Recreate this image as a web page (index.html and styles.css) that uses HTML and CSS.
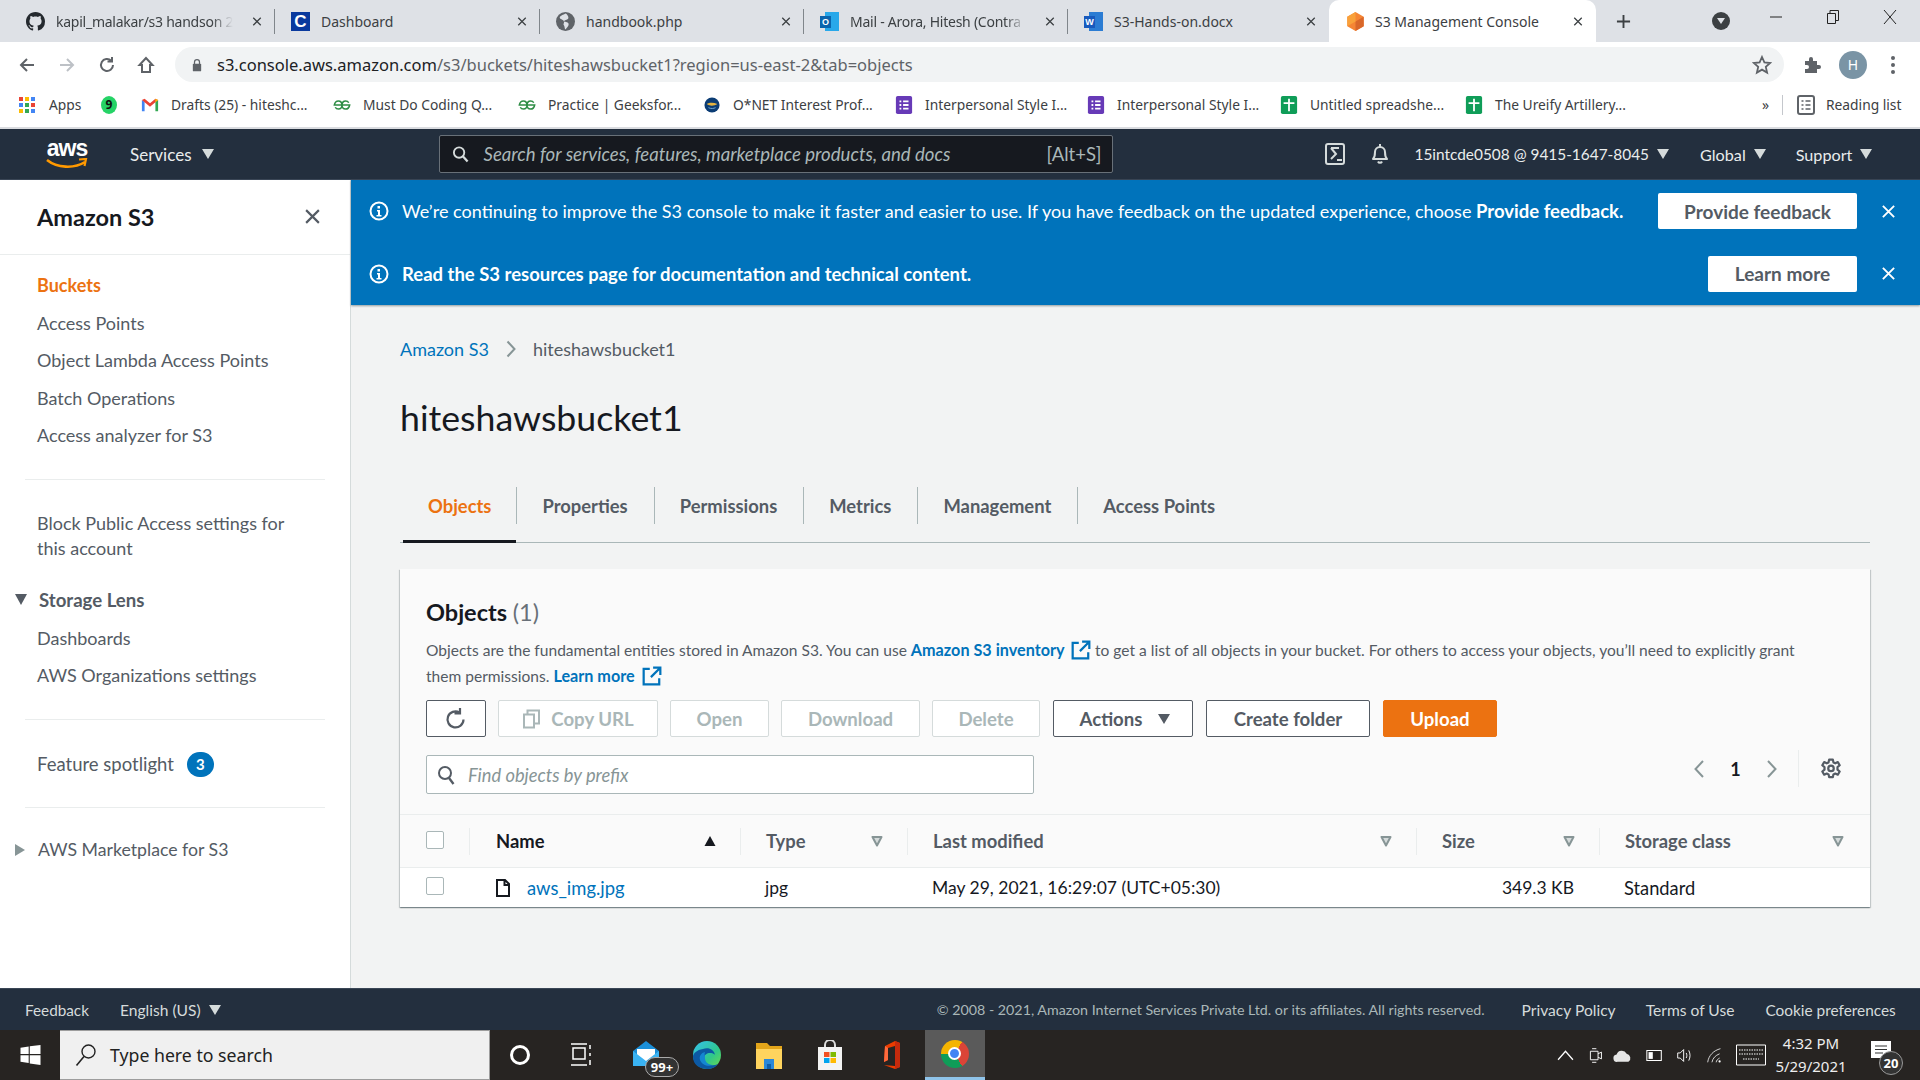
FILE: index.html
```html
<!DOCTYPE html>
<html lang="en">
<head>
<meta charset="utf-8">
<title>S3 Management Console</title>
<link rel="stylesheet" href="styles.css">
</head>
<body>
<svg class="defs" width="0" height="0" aria-hidden="true">
  <symbol id="filter" viewBox="0 0 12 12"><path d="M1.5 2h9L6 10.5z" fill="#d5dbdb" stroke="#879596" stroke-width="2" stroke-linejoin="round"/></symbol>
  <symbol id="ext" viewBox="0 0 18 18"><path d="M7 2.500H1.500v14h14V11M10 1.500h6.500V8M16 2L8 10" fill="none" stroke="currentColor" stroke-width="2"/></symbol>
  <symbol id="form" viewBox="0 0 20 20"><rect x="1" y="0" width="18" height="20" rx="2" fill="#673ab7"/><path d="M5 5h2v2H5zM9 5h6v2H9zM5 9h2v2H5zM9 9h6v2H9zM5 13h2v2H5zM9 13h6v2H9z" fill="#fff"/></symbol>
  <symbol id="sheet" viewBox="0 0 20 20"><rect x="1" y="0" width="18" height="20" rx="2" fill="#0f9d58"/><path d="M4 7h12v2H4zM9 3h2v14H9z" fill="#fff"/></symbol>
  <symbol id="gfg" viewBox="0 0 20 12"><path d="M10 6H18.500C18 9 16 10.500 14 10.500 11.500 10.500 10 8.500 10 6S8.500 1.500 6 1.500C4 1.500 2 3 1.500 6H10M10 6c0-2.500 1.500-4.500 4-4.500 1.500 0 2.800.7 3.500 2M10 6c0 2.500-1.500 4.500-4 4.500-1.500 0-2.800-.7-3.500-2" fill="none" stroke="#2f8d46" stroke-width="1.700"/></symbol>
  <symbol id="info" viewBox="0 0 20 20"><circle cx="10" cy="10" r="8.500" fill="none" stroke="#fff" stroke-width="2"/><path d="M8.500 5h2.500v2.500H8.500zM8 9h3v5h1.500v1.500h-5V14H9v-3.500H8z" fill="#fff"/></symbol>
  <symbol id="cross" viewBox="0 0 16 16"><path d="M2 2l12 12M14 2L2 14" fill="none" stroke="currentColor" stroke-width="2"/></symbol>
</svg>

<div class="tabstrip">
  <div class="tab sep">
    <svg class="favicon" viewBox="0 0 16 16"><path fill="#24292e" d="M8 0C3.580 0 0 3.580 0 8c0 3.540 2.290 6.530 5.470 7.590.4.070.55-.17.55-.38 0-.19-.01-.82-.01-1.490-2.010.37-2.530-.49-2.690-.94-.09-.23-.48-.94-.82-1.130-.28-.15-.68-.52-.01-.53.63-.01 1.080.58 1.230.82.720 1.210 1.870.87 2.330.66.07-.52.28-.87.51-1.070-1.780-.2-3.640-.89-3.640-3.950 0-.87.31-1.590.82-2.150-.08-.2-.36-1.020.08-2.120 0 0 .67-.21 2.200.82.64-.18 1.320-.27 2-.27.68 0 1.360.09 2 .27 1.530-1.040 2.200-.82 2.200-.82.44 1.100.16 1.920.08 2.120.51.56.82 1.270.82 2.150 0 3.070-1.870 3.750-3.650 3.950.29.25.54.73.54 1.480 0 1.070-.01 1.930-.01 2.200 0 .21.15.46.55.38A8.013 8.013 0 0016 8c0-4.420-3.580-8-8-8z"/></svg>
    <span class="tab-title fade">kapil_malakar/s3 handson 2</span>
    <svg class="tab-x"><use href="#cross"/></svg>
  </div>
  <div class="tab sep">
    <span class="favicon fav-c">C</span>
    <span class="tab-title">Dashboard</span>
    <svg class="tab-x"><use href="#cross"/></svg>
  </div>
  <div class="tab sep">
    <svg class="favicon" viewBox="0 0 18 18"><circle cx="9" cy="9" r="9" fill="#5f6368"/><path d="M9 1.500C7 3 4 3 3.500 5.500c1 2 3.500 1.500 4 3.500s-1 2 0 3.500.5 3.500 1.500 4c1-1.500 3-3 3-5s-3-2-4.500-2.500c.5-1.500 3-1 4-2.500S10.500 2 9 1.500z" fill="#dee1e6"/></svg>
    <span class="tab-title">handbook.php</span>
    <svg class="tab-x"><use href="#cross"/></svg>
  </div>
  <div class="tab sep">
    <span class="favicon fav-o"><span class="fav-o-back"></span><span class="fav-o-front">O</span></span>
    <span class="tab-title fade">Mail - Arora, Hitesh (Contra</span>
    <svg class="tab-x"><use href="#cross"/></svg>
  </div>
  <div class="tab">
    <span class="favicon fav-w"><span class="fav-w-back"></span><span class="fav-w-front">W</span></span>
    <span class="tab-title">S3-Hands-on.docx</span>
    <svg class="tab-x"><use href="#cross"/></svg>
  </div>
  <div class="tab active">
    <svg class="favicon" viewBox="0 0 20 22"><path d="M10 0l9.500 5.500v11L10 22 .5 16.500v-11z" fill="#f58534"/><path d="M10 11l9.500-5.500v11L10 22z" fill="#d9672a"/><path d="M.5 5.500L10 0v11l-9.500 5.500z" fill="#f9a13a"/></svg>
    <span class="tab-title">S3 Management Console</span>
    <svg class="tab-x"><use href="#cross"/></svg>
  </div>
  <div class="strip-end">
    <svg class="newtab" viewBox="0 0 16 16"><path d="M8 1v14M1 8h14" stroke="#3c4043" stroke-width="2" fill="none"/></svg>
    <span class="profile-dot"><span class="profile-arrow"></span></span>
    <div class="winctl">
      <svg class="win-ic" viewBox="0 0 14 14"><path d="M1 7h12" stroke="#222" fill="none"/></svg>
      <svg class="win-ic" viewBox="0 0 14 14"><path d="M1.500 3.500h8v10h-8zM4 3.500V.5h8.500v10H9.500" stroke="#222" fill="none"/></svg>
      <svg class="win-ic" viewBox="0 0 14 14"><path d="M1 0l12 14M13 0L1 14" stroke="#222" fill="none"/></svg>
    </div>
  </div>
</div>

<div class="toolbar">
  <svg class="tool-ic" viewBox="0 0 18 18"><path d="M16 9H3M9 3L3 9l6 6" fill="none" stroke="#5f6368" stroke-width="2"/></svg>
  <svg class="tool-ic" viewBox="0 0 18 18"><path d="M2 9h13M9 3l6 6-6 6" fill="none" stroke="#bdc1c6" stroke-width="2"/></svg>
  <svg class="tool-ic" viewBox="0 0 18 18"><path d="M15 9a6 6 0 1 1-1.800-4.300M14 1v4.500H9.500" fill="none" stroke="#5f6368" stroke-width="2"/></svg>
  <svg class="tool-ic" viewBox="0 0 18 18"><path d="M9 2L2.500 9H5v7h8V9h2.500z" fill="none" stroke="#5f6368" stroke-width="2"/></svg>
  <div class="omnibox">
    <svg class="lock" viewBox="0 0 12 16"><path d="M3 7V4.500a3 3 0 0 1 6 0V7" fill="none" stroke="#5f6368" stroke-width="1.500"/><rect x="1" y="6.500" width="10" height="9" rx="1" fill="#5f6368"/></svg>
    <span class="url"><span class="url-host">s3.console.aws.amazon.com</span>/s3/buckets/hiteshawsbucket1?region=us-east-2&amp;tab=objects</span>
    <svg class="star" viewBox="0 0 20 20"><path d="M10 2l2.400 5.400 5.800.6-4.400 3.900 1.300 5.700L10 14.600 4.900 17.600l1.300-5.700L1.800 8l5.800-.6z" fill="none" stroke="#5f6368" stroke-width="1.800"/></svg>
  </div>
  <svg class="puzzle" viewBox="0 0 20 20"><path d="M3 6h4V4a2 2 0 0 1 4 0v2h4v4h2a2 2 0 0 1 0 4h-2v4H3v-4h2a2 2 0 0 0 0-4H3z" fill="#5f6368"/></svg>
  <span class="avatar">H</span>
  <span class="kebab"><i></i><i></i><i></i></span>
</div>

<div class="bookmarks">
  <div class="bm-list">
    <div class="bm"><span class="apps"><i class="r"></i><i class="y"></i><i class="b"></i><i class="b"></i><i class="g"></i><i class="r"></i><i class="y"></i><i class="g"></i><i class="b"></i></span><span class="bm-t">Apps</span></div>
    <div class="bm"><span class="bm-nine">9</span></div>
    <div class="bm"><svg class="bm-ic" viewBox="0 0 20 16"><path d="M1 15V2.500l3 2V15z" fill="#4285f4"/><path d="M16 15V4.500l3-2V15z" fill="#34a853"/><path d="M1 2.500L4 1l6 5 6-5 3 1.500L10 10z" fill="#ea4335"/><path d="M16 1l3 1.500L16 5z" fill="#fbbc04"/></svg><span class="bm-t">Drafts (25) - hiteshc...</span></div>
    <div class="bm"><svg class="bm-ic" viewBox="0 0 20 12"><use href="#gfg"/></svg><span class="bm-t">Must Do Coding Q...</span></div>
    <div class="bm"><svg class="bm-ic" viewBox="0 0 20 12"><use href="#gfg"/></svg><span class="bm-t">Practice | Geeksfor...</span></div>
    <div class="bm"><svg class="bm-ic" viewBox="0 0 18 18"><circle cx="9" cy="9" r="8.500" fill="#0b3c74"/><path d="M3 8c3-2 8-2 12 0-3 2-8 3-12 0z" fill="#e3b341"/><path d="M5 12c3 1.500 6 1 8 0" stroke="#7ab3e0" fill="none"/></svg><span class="bm-t">O*NET Interest Prof...</span></div>
    <div class="bm"><svg class="bm-ic tall"><use href="#form"/></svg><span class="bm-t">Interpersonal Style I...</span></div>
    <div class="bm"><svg class="bm-ic tall"><use href="#form"/></svg><span class="bm-t">Interpersonal Style I...</span></div>
    <div class="bm"><svg class="bm-ic tall"><use href="#sheet"/></svg><span class="bm-t">Untitled spreadshe...</span></div>
    <div class="bm"><svg class="bm-ic tall"><use href="#sheet"/></svg><span class="bm-t">The Ureify Artillery...</span></div>
  </div>
  <span class="bm-more">»</span>
  <div class="bm-reading">
    <svg class="bm-ic tall" viewBox="0 0 18 20"><rect x="1" y="1" width="16" height="18" rx="2" fill="none" stroke="#5f6368" stroke-width="2"/><path d="M4.500 6h2M8.500 6h5M4.500 10h2M8.500 10h5M4.500 14h2M8.500 14h5" stroke="#5f6368" stroke-width="1.500"/></svg>
    <span class="bm-t">Reading list</span>
  </div>
</div>

<header class="awsnav">
  <div class="aws-logo">
    <span class="aws-word">aws</span>
    <svg class="aws-smile" viewBox="0 0 42 13"><path d="M1 2c10 8 27 9 38 2" fill="none" stroke="#ff9900" stroke-width="2.600"/><path d="M33 1.500l7-.5-1.500 7" fill="none" stroke="#ff9900" stroke-width="2.200"/></svg>
  </div>
  <span class="nav-link services">Services</span><span class="caret"></span>
  <div class="nav-search">
    <svg class="nav-search-ic" viewBox="0 0 18 18"><circle cx="7.500" cy="7.500" r="5.500" fill="none" stroke="#d5dbdb" stroke-width="2"/><path d="M11.500 11.500l5 5.500" stroke="#d5dbdb" stroke-width="2.400"/></svg>
    <span class="nav-ph">Search for services, features, marketplace products, and docs</span>
    <span class="nav-kbd">[Alt+S]</span>
  </div>
  <div class="nav-right">
    <svg class="nav-ic" viewBox="0 0 20 22"><rect x="1" y="1" width="18" height="20" rx="2" fill="none" stroke="#d5dbdb" stroke-width="2"/><path d="M6 5h8M6 5l5 6-5 5" fill="none" stroke="#d5dbdb" stroke-width="2"/><path d="M12 17h5" stroke="#d5dbdb" stroke-width="2"/></svg>
    <svg class="nav-ic bell" viewBox="0 0 20 22"><path d="M3 16c2-2 2-4 2-7a5 5 0 0 1 10 0c0 3 0 5 2 7z" fill="none" stroke="#d5dbdb" stroke-width="2" stroke-linejoin="round"/><path d="M8 18.500a2.200 2.200 0 0 0 4 0M10 1v3" fill="none" stroke="#d5dbdb" stroke-width="2"/></svg>
    <span class="nav-link acct">15intcde0508 @ 9415-1647-8045</span><span class="caret"></span>
    <span class="nav-link glob">Global</span><span class="caret"></span>
    <span class="nav-link supp">Support</span><span class="caret"></span>
  </div>
</header>

<div class="app">
  <aside class="side">
    <div class="side-head">
      <span class="side-title">Amazon S3</span>
      <svg class="side-x"><use href="#cross"/></svg>
    </div>
    <nav class="side-group first">
      <a class="side-item current">Buckets</a>
      <a class="side-item">Access Points</a>
      <a class="side-item">Object Lambda Access Points</a>
      <a class="side-item">Batch Operations</a>
      <a class="side-item">Access analyzer for S3</a>
    </nav>
    <hr class="side-rule">
    <a class="side-multi">Block Public Access settings for this account</a>
    <div class="side-section"><span class="tri-down"></span><span>Storage Lens</span></div>
    <nav class="side-group lens">
      <a class="side-item">Dashboards</a>
      <a class="side-item">AWS Organizations settings</a>
    </nav>
    <hr class="side-rule second">
    <div class="side-spot"><span>Feature spotlight</span><span class="badge">3</span></div>
    <hr class="side-rule third">
    <div class="side-market"><span class="tri-right"></span><span>AWS Marketplace for S3</span></div>
  </aside>

  <main class="main">
    <section class="flash">
      <div class="flash-row">
        <svg class="flash-ic"><use href="#info"/></svg>
        <p class="flash-text">We’re continuing to improve the S3 console to make it faster and easier to use. If you have feedback on the updated experience, choose <b>Provide feedback.</b></p>
        <span class="flash-btn fb">Provide feedback</span>
        <svg class="flash-x"><use href="#cross"/></svg>
      </div>
      <div class="flash-row">
        <svg class="flash-ic"><use href="#info"/></svg>
        <p class="flash-text"><b>Read the S3 resources page for documentation and technical content.</b></p>
        <span class="flash-btn lm">Learn more</span>
        <svg class="flash-x"><use href="#cross"/></svg>
      </div>
    </section>

    <div class="content">
      <div class="crumbs">
        <a class="link">Amazon S3</a>
        <svg class="crumb-sep" viewBox="0 0 10 18"><path d="M1.500 1.500L8.500 9l-7 7.500" fill="none" stroke="#879596" stroke-width="2"/></svg>
        <span class="crumb-cur">hiteshawsbucket1</span>
      </div>
      <h1 class="title">hiteshawsbucket1</h1>
      <div class="tabs">
        <span class="ctab on">Objects</span>
        <span class="ctab">Properties</span>
        <span class="ctab">Permissions</span>
        <span class="ctab">Metrics</span>
        <span class="ctab">Management</span>
        <span class="ctab last">Access Points</span>
      </div>

      <section class="card">
        <div class="card-head">
          <h2 class="card-title">Objects <span class="count">(1)</span></h2>
          <p class="desc">Objects are the fundamental entities stored in Amazon S3. You can use <a class="link strong">Amazon S3 inventory <svg class="ext"><use href="#ext"/></svg></a> to get a list of all objects in your bucket. For others to access your objects, you’ll need to explicitly grant them permissions. <a class="link strong">Learn more <svg class="ext"><use href="#ext"/></svg></a></p>
          <div class="actions">
            <span class="btn refresh"><svg class="refresh-ic" viewBox="0 0 22 24"><path d="M18.500 12.500a8 8 0 1 1-4-7M15 1v5.500H9.500" fill="none" stroke="#545b64" stroke-width="2.200"/></svg></span>
            <span class="btn off copy"><svg class="copy-ic" viewBox="0 0 18 20"><path d="M1.500 5.500h10v13h-10zM5 5V1.500h11.500v13H12" fill="none" stroke="#aab7b8" stroke-width="2"/></svg>Copy URL</span>
            <span class="btn off open">Open</span>
            <span class="btn off dl">Download</span>
            <span class="btn off del">Delete</span>
            <span class="btn act">Actions<span class="caret dark"></span></span>
            <span class="btn mk">Create folder</span>
            <span class="btn up">Upload</span>
          </div>
          <div class="filter-row">
            <div class="filter">
              <svg class="filter-ic" viewBox="0 0 18 20"><circle cx="8" cy="8" r="6" fill="none" stroke="#545b64" stroke-width="2"/><path d="M12 13l4.500 6" stroke="#545b64" stroke-width="2.400"/></svg>
              <span class="filter-ph">Find objects by prefix</span>
            </div>
            <div class="pager">
              <svg class="pg-ch" viewBox="0 0 12 20"><path d="M10 2L2.500 10l7.500 8" fill="none" stroke="#879596" stroke-width="2"/></svg>
              <span class="pg-num">1</span>
              <svg class="pg-ch" viewBox="0 0 12 20"><path d="M2 2l7.500 8L2 18" fill="none" stroke="#879596" stroke-width="2"/></svg>
              <span class="pg-div"></span>
              <svg class="pg-gear" viewBox="0 0 20 20"><path d="M8.300 1.500h3.400l.5 2.500 1.700.8 2.300-1.100 1.700 2.900-2 1.700v2.300l2 1.700-1.700 2.900-2.300-1.100-1.700.8-.5 2.500H8.300l-.5-2.500-1.700-.8-2.300 1.100-1.700-2.900 2-1.700V8.300l-2-1.700 1.700-2.900 2.300 1.100 1.700-.8z" fill="none" stroke="#545b64" stroke-width="2" stroke-linejoin="round"/><circle cx="10" cy="9.500" r="2.500" fill="none" stroke="#545b64" stroke-width="2"/></svg>
            </div>
          </div>
        </div>
        <div class="thead">
          <div class="th-check"><span class="check"></span></div>
          <div class="th-wrap"><div class="th first"><span>Name</span><svg class="sort-up" viewBox="0 0 12 12"><path d="M6 1l5.500 10H.5z" fill="#16191f"/></svg></div></div>
          <div class="th-wrap"><div class="th"><span>Type</span><svg class="sort"><use href="#filter"/></svg></div></div>
          <div class="th-wrap"><div class="th"><span>Last modified</span><svg class="sort"><use href="#filter"/></svg></div></div>
          <div class="th-wrap"><div class="th"><span>Size</span><svg class="sort"><use href="#filter"/></svg></div></div>
          <div class="th-wrap"><div class="th end"><span>Storage class</span><svg class="sort"><use href="#filter"/></svg></div></div>
        </div>
        <div class="trow">
          <div class="th-check"><span class="check"></span></div>
          <div class="td name"><svg class="file-ic" viewBox="0 0 14 18"><path d="M1 1h8l4 4v12H1zM8.500 1v5h4.500" fill="none" stroke="#16191f" stroke-width="2"/></svg><a class="link">aws_img.jpg</a></div>
          <div class="td">jpg</div>
          <div class="td">May 29, 2021, 16:29:07 (UTC+05:30)</div>
          <div class="td right">349.3 KB</div>
          <div class="td cls">Standard</div>
        </div>
      </section>
    </div>
  </main>
</div>

<footer class="foot">
  <span class="f-fb">Feedback</span>
  <span class="f-lang">English (US)</span><span class="caret"></span>
  <span class="f-copy">© 2008 - 2021, Amazon Internet Services Private Ltd. or its affiliates. All rights reserved.</span>
  <span class="f-link pp">Privacy Policy</span>
  <span class="f-link tu">Terms of Use</span>
  <span class="f-link cp">Cookie preferences</span>
</footer>

<div class="taskbar">
  <div class="tb-start"><svg class="win-logo" viewBox="0 0 22 22"><path d="M0 3l9-1.300V10H0zM10.200 1.500L22 0v10H10.200zM0 11.200h9v8.500L0 18.500zM10.200 11.200H22V22l-11.800-1.700z" fill="#fff"/></svg></div>
  <div class="tb-search">
    <svg class="tb-mag" viewBox="0 0 22 24"><circle cx="13.500" cy="8.500" r="6.500" fill="none" stroke="#222" stroke-width="1.400"/><path d="M9 13.500L1.500 22.500" stroke="#222" stroke-width="1.600"/></svg>
    <span class="tb-ph">Type here to search</span>
  </div>
  <div class="tb-cortana"><span class="ring"></span></div>
  <div class="tb-task"><svg class="tv" viewBox="0 0 22 24"><path d="M3 5h12v11H3zM1 1h16M1 22h16M20 2v4M20 10v3M20 17v5" fill="none" stroke="#fff" stroke-width="1.500"/></svg></div>
  <div class="tb-icon mail">
    <svg class="tb-app" viewBox="0 0 30 30"><path d="M2 11L15 1l13 10v15H2z" fill="#1b8fd8"/><path d="M6 9h18v8l-9 5-9-5z" fill="#fff"/><path d="M2 11l13 10 13-10v15H2z" fill="#3ab3f3"/></svg>
    <span class="tb-badge">99+</span>
  </div>
  <div class="tb-icon">
    <svg class="tb-app" viewBox="0 0 30 30"><defs><linearGradient id="eg" x1="0" y1="0" x2="1" y2="1"><stop offset="0" stop-color="#35c1f1"/><stop offset=".6" stop-color="#2fc88b"/><stop offset="1" stop-color="#6fdb4a"/></linearGradient></defs><circle cx="15" cy="15" r="14" fill="url(#eg)"/><path d="M1 17C1 25 8 29 15 29c5 0 9-2 11-5-7 3-14 0-14-6 0-3 3-5 6-5 4 0 5 2 5 2C22 9 16 7 11 9 5 10 1 13 1 17z" fill="#0c59a4"/><path d="M13 18c0 4 3 7 8 7-5 2-11 0-13-5-1-4 1-7 5-8-1 2 0 4 0 6z" fill="#1486d1"/></svg>
  </div>
  <div class="tb-icon">
    <svg class="tb-app" viewBox="0 0 30 30"><path d="M2 3h11l3 3h12v5H2z" fill="#e3a51a"/><path d="M2 9h26v20H2z" fill="#ffd45e"/><path d="M10 19h10v10H10z" fill="#2b88d8"/><path d="M13 24h4v5h-4z" fill="#0f5ea8"/></svg>
  </div>
  <div class="tb-icon">
    <svg class="tb-app" viewBox="0 0 30 30"><path d="M10 8V5a5 5 0 0 1 10 0v3" fill="none" stroke="#ddd" stroke-width="2"/><path d="M3 7h24v23H3z" fill="#f3f3f3"/><path d="M9 12h5.500v5H9z" fill="#f25022"/><path d="M15.500 12H21v5h-5.500z" fill="#7fba00"/><path d="M9 18h5.500v5H9z" fill="#00a4ef"/><path d="M15.500 18H21v5h-5.500z" fill="#ffb900"/></svg>
  </div>
  <div class="tb-icon">
    <svg class="tb-app" viewBox="0 0 30 30"><path d="M8 6l10-5 5 2v24l-5 2L7 25l11 1V6l-7 2v12l-4 2z" fill="#eb3c00"/><path d="M18 1l5 2v24l-5 2z" fill="#c62a0c"/><path d="M7 22l4-2V8L8 6z" fill="#ff6a3d"/></svg>
  </div>
  <div class="tb-icon chrome"><span class="chrome-logo"><span class="chrome-eye"></span></span></div>
  <div class="tb-tray">
    <svg class="tr" viewBox="0 0 16 16"><path d="M1 12l7-8 7 8" fill="none" stroke="#fff" stroke-width="1.200"/></svg>
    <svg class="tr" viewBox="0 0 16 20"><path d="M2 5h9v10H2zM11 8l4-2v8l-4-2M4 2h5M4 18h5" fill="none" stroke="#fff" stroke-width="1.100"/></svg>
    <svg class="tr wide" viewBox="0 0 22 16"><path d="M5 15a4 4 0 0 1-1-8 6 6 0 0 1 11-1 5 5 0 0 1 2 9z" fill="#e6e6e6"/></svg>
    <svg class="tr" viewBox="0 0 20 16"><path d="M1 2h17v12H1z" fill="none" stroke="#fff" stroke-width="1.200"/><path d="M3 4h5v8H3z" fill="#fff"/></svg>
    <svg class="tr" viewBox="0 0 20 20"><path d="M2 7h3l4-4v14l-4-4H2zM12 7c1 2 1 4 0 6M15 4c2 4 2 8 0 12" fill="none" stroke="#fff" stroke-width="1.100"/></svg>
    <svg class="tr" viewBox="0 0 20 20"><path d="M2 18C3 10 9 4 17 2M7 18c1-5 4-8 9-10M12 18c0-2 2-4 4-5" fill="none" stroke="#ddd" stroke-width="1.100"/><circle cx="16" cy="17" r="1.300" fill="#fff"/></svg>
    <svg class="tr kb" viewBox="0 0 30 22"><path d="M.5 1h29v20H.5z" fill="none" stroke="#fff"/><path d="M3 6h24M3 10h24M7 15h16" stroke="#fff" stroke-dasharray="1.500 1"/></svg>
    <div class="clock"><span>4:32 PM</span><span>5/29/2021</span></div>
    <div class="notif">
      <svg class="notif-ic" viewBox="0 0 20 20"><path d="M0 0h20v17H0z" fill="#fff"/><path d="M4 5h12M4 8.500h12M4 12h8" stroke="#333" stroke-width="1.200"/></svg>
      <span class="notif-badge">20</span>
    </div>
  </div>
</div>
</body>
</html>
```

FILE: styles.css
```css
* { box-sizing: border-box; }
html, body { margin: 0; padding: 0; }
body { width: 1920px; height: 1080px; overflow: hidden; display: flex; flex-direction: column; font-family: "Lato", "Liberation Sans", sans-serif; color: #16191f; background: #fff; }
.defs { position: absolute; }
a { text-decoration: none; }
p, h1, h2 { margin: 0; font-weight: normal; }
hr { border: 0; margin: 0; }

/* chrome tabs */
.tabstrip { flex: 0 0 42px; background: #dee1e6; display: grid; grid-template-columns: 265px 265px 264px 264px 261px 267px 1fr; padding-left: 10px; font-family: "Noto Sans", sans-serif; font-size: 14px; color: #3c4043; }
.tab { display: flex; align-items: center; padding: 0 9px 0 16px; gap: 11px; position: relative; }
.tab.sep::after { content: ""; position: absolute; right: 0; top: 9px; height: 25px; width: 1px; background: #80868b; }
.tab.active { background: #fff; border-radius: 10px 10px 0 0; padding-left: 17px; gap: 10px; }
.favicon { flex: 0 0 19px; width: 19px; height: 19px; }
.fav-c { background: #0a3a9e; color: #fff; font: bold 17px/19px "Liberation Sans", sans-serif; text-align: center; }
.fav-o, .fav-w { position: relative; display: block; }
.fav-o-back, .fav-w-back { position: absolute; right: 0; top: 0; width: 14px; height: 19px; background: #28a8ea; }
.fav-w-back { background: #2b7cd3; }
.fav-o-front, .fav-w-front { position: absolute; left: 0; top: 4px; width: 11px; height: 12px; background: #0a64ad; color: #fff; font: bold 9px/12px "Liberation Sans", sans-serif; text-align: center; }
.fav-w-front { background: #185abd; }
.tab-title { flex: 1; white-space: nowrap; min-width: 0; }
.tab-title.fade { letter-spacing: -0.25px; -webkit-mask-image: linear-gradient(90deg, #000 88%, transparent); mask-image: linear-gradient(90deg, #000 88%, transparent); }
.tab-x { flex: 0 0 10px; width: 10px; height: 11px; margin: 0 4px 0 8px; color: #3c4043; }
.strip-end { display: flex; align-items: center; }
.newtab { width: 15px; height: 15px; margin-left: 20px; }
.profile-dot { width: 18px; height: 18px; border-radius: 50%; background: #3c4043; margin-left: 81px; display: flex; align-items: center; justify-content: center; }
.profile-arrow { width: 0; height: 0; border: 4px solid transparent; border-top: 6px solid #dee1e6; border-bottom: 0; }
.winctl { display: flex; gap: 43px; margin-left: 39px; }
.win-ic { width: 14px; height: 14px; margin-bottom: 8px; }

/* toolbar */
.toolbar { flex: 0 0 42px; display: flex; align-items: center; padding: 3px 0 0 18px; background: #fff; }
.tool-ic { width: 18px; height: 18px; margin-right: 22px; }
.tool-ic:nth-child(3) { margin-right: 21px; }
.tool-ic:nth-child(4) { margin-right: 20px; }
.omnibox { width: 1609px; height: 35px; background: #f1f3f4; border-radius: 18px; display: flex; align-items: center; padding: 0 12px 0 17px; font-family: "Noto Sans", sans-serif; font-size: 16.500px; color: #5f6368; }
.lock { width: 10px; height: 14px; margin-right: 15px; }
.url { flex: 1; white-space: nowrap; }
.url-host { color: #202124; }
.star { width: 20px; height: 20px; }
.puzzle { width: 20px; height: 20px; margin-left: 18px; }
.avatar { width: 28px; height: 28px; border-radius: 50%; background: #7a94a5; color: #fff; font: 14px/28px "Noto Sans", sans-serif; text-align: center; margin-left: 17px; }
.kebab { display: flex; flex-direction: column; gap: 3px; margin-left: 24px; }
.kebab i { width: 4px; height: 4px; border-radius: 50%; background: #5f6368; }

/* bookmarks */
.bookmarks { flex: 0 0 45px; border-bottom: 2px solid #dadce0; display: flex; align-items: center; padding: 0 0 2px 19px; font-family: "Noto Sans", sans-serif; font-size: 13.800px; color: #3c4043; background: #fff; }
.bm-list { display: grid; grid-template-columns: 82px 40px 192px 185px 185px 192px 192px 193px 185px 280px; flex: 0 0 1736px; }
.bm { display: flex; align-items: center; gap: 12px; white-space: nowrap; }
.bm-t { white-space: nowrap; }
.bm-ic { width: 18px; height: 16px; flex: 0 0 18px; }
.bm-ic.tall { height: 20px; width: 18px; }
.apps { display: grid; grid-template-columns: repeat(3, 4px); gap: 2px; width: 18px; }
.apps i { height: 4px; display: block; }
.apps .r { background: #ea4335; } .apps .y { background: #fbbc04; } .apps .g { background: #34a853; } .apps .b { background: #4285f4; }
.bm-nine { width: 16px; height: 18px; border-radius: 50%; background: #25d366; color: #111; font: bold 12px/18px "Noto Sans", sans-serif; text-align: center; }
.bm-more { width: 27px; margin-left: 1px; border-right: 1px solid #c4c7cc; line-height: 20px; font-size: 14px; color: #3c4043; padding-left: 6px; height: 20px; }
.bm-reading { display: flex; align-items: center; gap: 11px; margin-left: 14px; }

/* aws nav */
.awsnav { flex: 0 0 51px; background: #232f3e; color: #d5dbdb; display: flex; align-items: center; padding-left: 47px; font-size: 15px; border-bottom: 1px solid #3a4656; }
.aws-logo { width: 40px; margin-right: 43px; display: flex; flex-direction: column; align-items: center; color: #fff; }
.aws-word { font: bold 23px/20px "Liberation Sans", sans-serif; letter-spacing: -1px; }
.aws-smile { width: 42px; height: 13px; margin-top: 0; }
.nav-link { white-space: nowrap; }
.services { font-size: 17px; color: #eaeded; }
.caret { display: inline-block; width: 0; height: 0; border-left: 6px solid transparent; border-right: 6px solid transparent; border-top: 10px solid #d5dbdb; margin-left: 8px; }
.services + .caret { margin-left: 10px; }
.caret.dark { border-top-color: #545b64; margin-left: 16px; }
.nav-search { width: 674px; height: 38px; margin-left: 225px; background: #16191f; border: 1px solid #687078; border-radius: 2px; display: flex; align-items: center; padding: 0 10px 0 12px; }
.nav-search-ic { width: 17px; height: 18px; margin-right: 15px; }
.nav-ph { flex: 1; font-style: italic; font-size: 18.600px; color: #aab7b8; white-space: nowrap; }
.nav-kbd { color: #aab7b8; font-size: 18.500px; }
.nav-right { display: flex; align-items: center; margin-left: 212px; }
.nav-ic { width: 20px; height: 22px; }
.bell { margin-left: 25px; margin-right: 25px; }
.acct { font-size: 15.400px; color: #eaeded; }
.glob { margin-left: 31px; font-size: 16.200px; color: #eaeded; }
.supp { margin-left: 30px; font-size: 16.200px; color: #eaeded; }

/* shell */
.app { flex: 0 0 808px; display: flex; }
.side { flex: 0 0 351px; background: #fff; border-right: 1px solid #d5dbdb; font-size: 18px; color: #545b64; }
.side-head { height: 75px; border-bottom: 1px solid #eaeded; display: flex; align-items: center; justify-content: space-between; padding: 0 29px 1px 37px; }
.side-title { font-size: 23.500px; font-weight: 700; color: #16191f; }
.side-x { width: 17px; height: 17px; color: #545b64; }
.side-group { display: flex; flex-direction: column; }
.side-group.first { margin-top: 12px; }
.side-group.lens { margin-top: 1px; }
.side-item { height: 37.500px; line-height: 37.500px; padding-left: 37px; white-space: nowrap; color: #545b64; }
.side-item.current { color: #ec7211; font-weight: 700; }
.side-rule { height: 1px; background: #eaeded; margin: 24px 25px 0; }
.side-multi { display: block; padding: 31px 60px 0 37px; line-height: 25px; color: #545b64; }
.side-section { display: flex; align-items: center; gap: 12px; height: 38px; margin-top: 20px; padding-left: 15px; font-size: 18.600px; font-weight: 700; color: #545b64; }
.tri-down { width: 0; height: 0; border-left: 6.500px solid transparent; border-right: 6.500px solid transparent; border-top: 11px solid #545b64; }
.side-rule.second { margin-top: 24px; }
.side-spot { display: flex; align-items: center; gap: 13px; height: 45px; margin-top: 22px; padding-left: 37px; font-size: 18.500px; }
.badge { width: 27px; height: 25px; border-radius: 13px; background: #0073bb; color: #fff; font-weight: 700; font-size: 15px; line-height: 25px; text-align: center; }
.side-rule.third { margin-top: 20px; }
.side-market { display: flex; align-items: center; gap: 13px; height: 38px; margin-top: 23px; padding-left: 15px; font-size: 17.700px; }
.tri-right { width: 0; height: 0; border-top: 6.500px solid transparent; border-bottom: 6.500px solid transparent; border-left: 10px solid #879596; }

.main { flex: 1; background: #f2f3f3; display: flex; flex-direction: column; min-width: 0; }
.flash { height: 125px; background: #0073bb; color: #fff; font-size: 18.050px; box-shadow: 0 1px 2px rgba(0,28,36,.4); }
.flash b { font-size: 18.500px; }
.flash-row { height: 62.500px; display: flex; align-items: center; padding: 0 24px 0 18px; }
.flash-ic { width: 20px; height: 20px; margin-right: 13px; flex: 0 0 20px; }
.flash-text { flex: 1; white-space: nowrap; }
.flash-btn { height: 36px; background: #fff; color: #545b64; font-size: 19px; font-weight: 700; display: flex; align-items: center; justify-content: center; border-radius: 2px; }
.flash-btn.fb { width: 199px; }
.flash-btn.lm { width: 149px; }
.flash-x { width: 15px; height: 15px; color: #fff; margin-left: 24px; flex: 0 0 15px; }

.content { padding: 33px 50px 0 49px; }
.link { color: #0073bb; }
.link.strong { font-weight: 700; font-size: 16.200px; }
.crumbs { display: flex; align-items: center; gap: 17px; height: 24px; margin-top: -1px; font-size: 18px; }
.crumb-sep { width: 10px; height: 18px; }
.crumb-cur { color: #545b64; }
.title { margin-top: 32px; font-size: 35.700px; line-height: 50px; color: #16191f; }
.tabs { margin-top: 27px; height: 73px; border-bottom: 1px solid #aab7b8; display: flex; padding: 17px 0 0 3px; font-size: 18.400px; font-weight: 700; color: #545b64; }
.ctab { height: 37px; display: flex; align-items: center; padding: 0 26px 0 25px; border-right: 1px solid #aab7b8; position: relative; white-space: nowrap; }
.ctab.last { border-right: 0; }
.ctab.on { color: #ec7211; padding-right: 25px; }
.ctab.on::after { content: ""; position: absolute; left: 0; right: 0; top: 53px; height: 3px; background: #16191f; }

.card { margin-top: 26px; height: 338px; background: #fafafa; box-shadow: 0 1px 1px 0 rgba(0,28,36,.3), 1px 1px 1px 0 rgba(0,28,36,.15), -1px 1px 1px 0 rgba(0,28,36,.15); }
.card-head { height: 245px; padding: 28px 26px 0; }
.card-title { font-size: 23.500px; line-height: 30px; font-weight: 700; }
.count { font-weight: 400; color: #687078; }
.desc { margin-top: 10px; margin-bottom: 13px; font-size: 15.550px; line-height: 25px; color: #545b64; height: 50px; padding-right: 30px; }
.ext { width: 20px; height: 20px; vertical-align: -4px; margin-left: 3px; color: #0073bb; }
.actions { display: flex; height: 37px; gap: 12px; }
.btn { height: 37px; display: flex; align-items: center; justify-content: center; border: 1px solid #545b64; border-radius: 2px; font-size: 18.600px; font-weight: 700; color: #545b64; background: #fff; white-space: nowrap; }
.btn.off { color: #aab7b8; border-color: #d5dbdb; }
.refresh { width: 60px; }
.refresh-ic { width: 24px; height: 24px; }
.copy { width: 160px; gap: 10px; }
.copy-ic { width: 19px; height: 20px; }
.open { width: 99px; }
.dl { width: 139px; }
.del { width: 108px; }
.act { width: 140px; margin-left: 1px; padding-left: 4px; }
.mk { width: 164px; margin-left: 1px; }
.up { width: 114px; background: #ec7211; border-color: #ec7211; color: #fff; margin-left: 1px; }
.filter-row { margin-top: 18px; height: 39px; display: flex; align-items: center; justify-content: space-between; }
.filter { width: 608px; height: 39px; border: 1px solid #aab7b8; border-radius: 2px; background: #fff; display: flex; align-items: center; padding-left: 10px; gap: 13px; }
.filter-ic { width: 18px; height: 20px; }
.filter-ph { font-style: italic; font-size: 18.300px; color: #879596; }
.pager { display: flex; align-items: center; margin-top: -12px; padding-right: 2px; }
.pg-ch { width: 12px; height: 20px; }
.pg-num { width: 61px; text-align: center; font-weight: 700; font-size: 18px; }
.pg-div { width: 1px; height: 37px; background: #eaeded; margin-left: 20px; margin-right: 21px; }
.pg-gear { width: 22px; height: 22px; }

.thead, .trow { display: grid; grid-template-columns: 69px 271px 167px 509px 183px 271px; }
.thead { height: 54px; border-top: 1px solid #eaeded; border-bottom: 1px solid #eaeded; align-items: center; font-size: 18.400px; font-weight: 700; color: #545b64; background: #fafafa; }
.th-check { padding-left: 26px; display: flex; align-items: center; }
.check { width: 18px; height: 18px; border: 1px solid #aab7b8; border-radius: 2px; background: #fff; }
.thead .check { margin-bottom: 2px; }
.trow .check { margin-bottom: 4px; }
.th { height: 27px; border-left: 1px solid #eaeded; display: flex; align-items: center; justify-content: space-between; padding: 0 24px 0 25px; white-space: nowrap; }
.th.first { color: #16191f; padding-left: 26px; }
.th.end { padding-right: 26px; }
.sort, .sort-up { width: 12px; height: 12px; }
.trow { height: 39px; background: #fff; align-items: center; font-size: 17.500px; }
.td { padding-left: 25px; white-space: nowrap; }
.td.name { padding-left: 27px; display: flex; align-items: center; gap: 17px; font-size: 18.400px; }
.td.right { text-align: right; padding-right: 25px; }
.td.cls { font-size: 18.300px; }
.file-ic { width: 14px; height: 18px; }

/* footer */
.foot { flex: 0 0 42px; background: #232f3e; border-top: 1px solid #3a4656; color: #d5dbdb; display: flex; align-items: center; padding-left: 25px; font-size: 15.600px; }
.f-fb { font-size: 15.300px; }
.f-lang { margin-left: 31px; }
.foot .caret { margin-left: 8px; }
.f-copy { margin-left: 716px; font-size: 14.250px; color: #aab7b8; white-space: nowrap; }
.f-link { white-space: nowrap; }
.pp { margin-left: 37px; } .tu { margin-left: 30px; } .cp { margin-left: 31px; font-size: 15.400px; }

/* windows taskbar */
.taskbar { flex: 0 0 50px; background: #272422; display: flex; align-items: stretch; color: #fff; font-family: "Noto Sans", sans-serif; }
.tb-start { flex: 0 0 60px; display: flex; align-items: center; justify-content: center; }
.win-logo { width: 21px; height: 20px; }
.tb-search { flex: 0 0 430px; background: #f0f0f0; border: 1px solid #9d9d9d; border-width: 1px 1px 1px 0; display: flex; align-items: center; padding-left: 15px; gap: 13px; color: #222; font-size: 17.700px; }
.tb-mag { width: 22px; height: 24px; }
.tb-cortana { flex: 0 0 60px; display: flex; align-items: center; justify-content: center; }
.ring { width: 20px; height: 20px; border: 3px solid #fff; border-radius: 50%; }
.tb-task { flex: 0 0 61px; display: flex; align-items: center; justify-content: center; }
.tb-icon { flex: 0 0 61.500px; display: flex; align-items: center; justify-content: center; position: relative; }
.tb-icon.mail { margin-left: 4px; }
.tv { width: 22px; height: 24px; }
.tb-app { width: 30px; height: 30px; }
.tb-badge { position: absolute; left: 30px; bottom: 3px; width: 34px; height: 20px; border: 1px solid #aaa; border-radius: 10px; background: #333; font-size: 13px; font-weight: 700; line-height: 18px; text-align: center; }
.chrome { flex-basis: 60px; margin-left: 2px; background: #5a5a5a; border-bottom: 3px solid #8fc4ea; }
.chrome-logo { width: 28px; height: 28px; border-radius: 50%; background: conic-gradient(from 30deg, #db4437 0 120deg, #0f9d58 120deg 240deg, #f4b400 240deg 360deg); display: flex; align-items: center; justify-content: center; }
.chrome-eye { width: 13px; height: 13px; border-radius: 50%; background: #4285f4; border: 2px solid #fff; }
.tb-tray { flex: 1; display: flex; align-items: center; justify-content: flex-end; gap: 13px; padding-right: 15px; }
.tr { width: 17px; height: 17px; }
.tr.wide { width: 20px; margin-left: -4px; }
.tr.kb { width: 30px; height: 22px; }
.clock { display: flex; flex-direction: column; align-items: center; font-size: 15px; line-height: 23px; width: 84px; margin: 0 1px 0 -10px; white-space: nowrap; color: #eee; }
.notif { width: 38px; height: 40px; position: relative; }
.notif-ic { width: 20px; height: 20px; position: absolute; left: 4px; top: 6px; }
.notif-badge { position: absolute; right: 2px; top: 16px; width: 24px; height: 24px; border: 1px solid #999; border-radius: 50%; background: #333; font-size: 13px; font-weight: 700; line-height: 22px; text-align: center; }
```
